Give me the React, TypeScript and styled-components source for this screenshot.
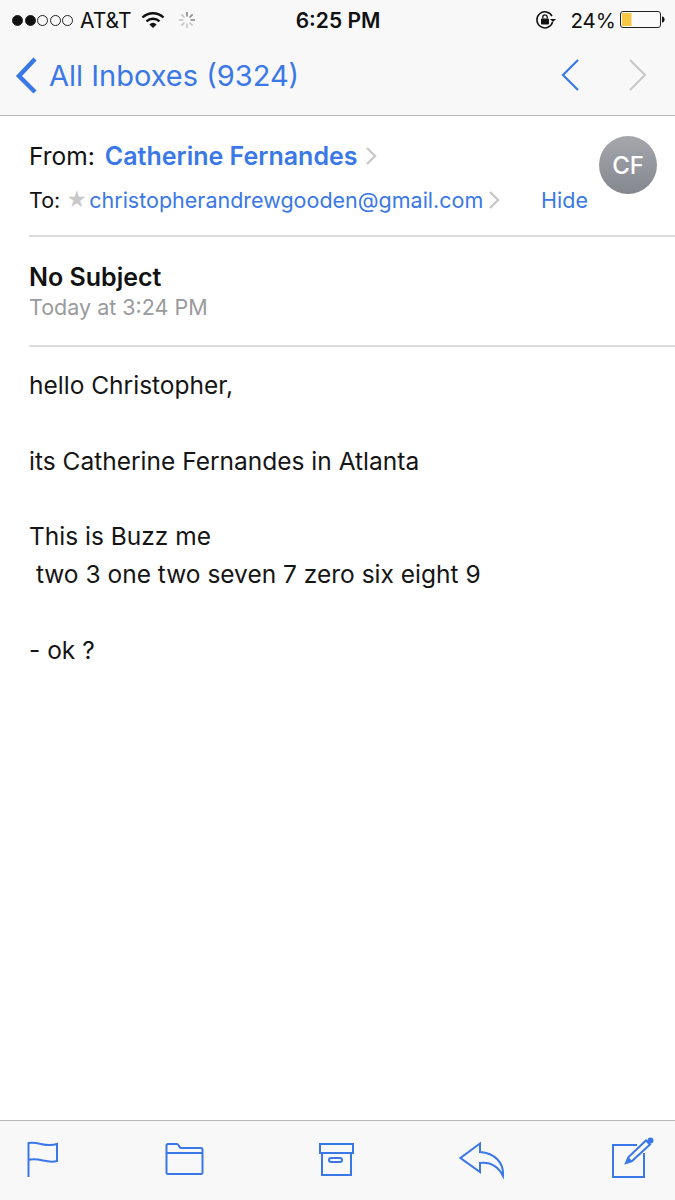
import styled, { createGlobalStyle } from "styled-components";

const BLUE = "#3b78e7";

const Global = createGlobalStyle`
  html, body { margin: 0; padding: 0; background: #fff; }
  body { font-family: Inter, "Liberation Sans", sans-serif; color: #111; }
`;

const Page = styled.div`
  width: 675px;
  height: 1200px;
  display: flex;
  flex-direction: column;
  overflow: hidden;
  background: #fff;
`;

const TopBar = styled.header`
  height: 116px;
  box-sizing: border-box;
  flex: none;
  background: #f8f8f9;
  border-bottom: 1px solid #b9b9bb;
`;

const StatusBar = styled.div`
  height: 40px;
  display: grid;
  grid-template-columns: 1fr auto 1fr;
  align-items: center;
  padding: 0 10px 0 12px;
  font-size: 21px;
  color: #111;
`;

const StatusSide = styled.div<{ $end?: boolean }>`
  display: flex;
  align-items: center;
  justify-content: ${(p) => (p.$end ? "flex-end" : "flex-start")};
`;

const Dots = styled.div`
  display: flex;
  gap: 1.5px;
  margin-right: 7px;
`;

const Dot = styled.span<{ $on?: boolean }>`
  width: 11px;
  height: 11px;
  box-sizing: border-box;
  border-radius: 50%;
  border: 1px solid #222;
  background: ${(p) => (p.$on ? "#111" : "transparent")};
`;

const Carrier = styled.span`
  margin-right: 10px;
`;

const Clock = styled.span`
  font-weight: 600;
  margin-right: 1px;
`;

const Percent = styled.span`
  font-size: 20.5px;
  margin: 0 4px 0 13px;
`;

const NavRow = styled.nav`
  height: 75px;
  box-sizing: border-box;
  display: flex;
  align-items: center;
  padding: 0 28px 5px 14px;
`;

const BackLink = styled.div`
  display: flex;
  align-items: center;
  gap: 11px;
  flex: 1;
  font-size: 29px;
  color: ${BLUE};
`;

const Pager = styled.div`
  display: flex;
  gap: 48px;
  align-items: center;
`;

const Sender = styled.section`
  height: 121px;
  box-sizing: border-box;
  margin-left: 29px;
  padding: 20px 18px 0 0;
  border-bottom: 2px solid #dcdcde;
  display: flex;
  flex: none;
`;

const SenderLines = styled.div`
  flex: 1;
`;

const FromRow = styled.div`
  display: flex;
  align-items: center;
  height: 40px;
  font-size: 24.5px;
`;

const FromName = styled.span`
  color: ${BLUE};
  font-weight: 600;
  font-size: 25px;
  margin: 0 7px 0 10px;
`;

const ToRow = styled.div`
  display: flex;
  align-items: center;
  height: 40px;
  margin-top: 4px;
  font-size: 21.5px;
`;

const Star = styled.span`
  color: #c9c9cb;
  margin: 0 2px 0 6px;
  font-size: 20px;
`;

const Address = styled.span`
  color: ${BLUE};
  margin-right: 5px;
`;

const Hide = styled.span`
  color: ${BLUE};
  margin-left: auto;
  margin-right: 11px;
`;

const Avatar = styled.div`
  width: 58px;
  height: 58px;
  border-radius: 50%;
  background: linear-gradient(#a5a7ad, #85878f);
  color: #fff;
  font-size: 24px;
  font-weight: 500;
  display: flex;
  align-items: center;
  justify-content: center;
  flex: none;
`;

const Subject = styled.section`
  height: 110px;
  box-sizing: border-box;
  margin-left: 29px;
  padding-top: 24px;
  border-bottom: 2px solid #dcdcde;
  flex: none;
`;

const SubjectTitle = styled.div`
  font-size: 25px;
  font-weight: 600;
  line-height: 32px;
`;

const SubjectDate = styled.div`
  font-size: 21.5px;
  color: #9a9a9c;
  line-height: 28px;
`;

const Body = styled.main`
  flex: 1;
  padding: 20px 29px 0;
  font-size: 24.5px;
  line-height: 37.8px;
  color: #151515;
  white-space: pre-wrap;
`;

const BottomBar = styled.footer`
  height: 80px;
  box-sizing: border-box;
  flex: none;
  background: #f8f8f9;
  border-top: 1px solid #b9b9bb;
  display: flex;
  align-items: flex-start;
  justify-content: space-between;
  padding: 16px 21px 0 25px;
`;

const IconSvg = styled.svg<{ $left?: number }>`
  display: block;
  flex: none;
  margin-left: ${(p) => p.$left ?? 0}px;
`;

const Wifi = () => (
  <IconSvg width="24" height="18" viewBox="0 0 24 18">
    <path d="M1.5 6.5a15 15 0 0 1 21 0" fill="none" stroke="#111" strokeWidth="2.4" />
    <path d="M5.5 10.3a9.5 9.5 0 0 1 13 0" fill="none" stroke="#111" strokeWidth="2.4" />
    <path d="M12 17l-3.6-3.6a5 5 0 0 1 7.2 0z" fill="#111" />
  </IconSvg>
);

const Spinner = () => (
  <IconSvg $left={12} width="20" height="20" viewBox="0 0 20 20">
    {Array.from({ length: 8 }).map((_, i) => (
      <line
        key={i}
        x1="10"
        y1="2"
        x2="10"
        y2="6.5"
        stroke={i < 3 ? "#8a8a8a" : "#c4c4c4"}
        strokeWidth="1.6"
        transform={`rotate(${i * 45} 10 10)`}
      />
    ))}
  </IconSvg>
);

const RotationLock = () => (
  <IconSvg width="22" height="20" viewBox="0 0 22 20">
    <path d="M17 6.2A8 8 0 1 0 17.6 12" fill="none" stroke="#111" strokeWidth="1.5" />
    <path d="M15 9h6l-3 3z" fill="#111" />
    <rect x="6" y="8.5" width="8" height="6" rx="1" fill="#111" />
    <path d="M7.8 8.5V7a2.2 2.2 0 0 1 4.4 0v1.5" fill="none" stroke="#111" strokeWidth="1.3" />
  </IconSvg>
);

const Battery = () => (
  <IconSvg width="45" height="18" viewBox="0 0 45 18">
    <rect x="0.5" y="0.5" width="40" height="16" rx="2.5" fill="#fbfbfb" stroke="#222" />
    <rect x="2" y="2" width="9.5" height="13" fill="#f6c844" />
    <path d="M42 5.5c1.8.3 2.6 1.4 2.6 3s-.8 2.7-2.6 3z" fill="#111" />
  </IconSvg>
);

const Chevron = ({
  points,
  w,
  h,
  color,
  sw,
}: {
  points: string;
  w: number;
  h: number;
  color: string;
  sw: number;
}) => (
  <IconSvg width={w} height={h} viewBox={`0 0 ${w} ${h}`}>
    <polyline points={points} fill="none" stroke={color} strokeWidth={sw} />
  </IconSvg>
);

const Flag = () => (
  <IconSvg width="34" height="40" viewBox="0 0 34 40">
    <path
      d="M3.5 40V6c10-2 17 5 28.5 1v17c-10 3-18-4-28.500-1"
      fill="none"
      stroke={BLUE}
      strokeWidth="2"
    />
  </IconSvg>
);

const Folder = () => (
  <IconSvg $left={1} width="40" height="42" viewBox="0 0 40 42">
    <path
      d="M1.5 16V8.5A1.5 1.5 0 0 1 3 7h9c2 0 2 4 4 4h20a1.5 1.5 0 0 1 1.5 1.5v23a1.5 1.5 0 0 1-1.5 1.5H3a1.5 1.5 0 0 1-1.5-1.5zM1.5 16h36"
      fill="none"
      stroke={BLUE}
      strokeWidth="2"
    />
  </IconSvg>
);

const ArchiveBox = () => (
  <IconSvg $left={5} width="38" height="42" viewBox="0 0 38 42">
    <path
      d="M4 7h33v9H4zM6 16v22h29V16M15 21h9a2 2 0 0 1 0 4h-9a2 2 0 0 1 0-4z"
      fill="none"
      stroke={BLUE}
      strokeWidth="2"
    />
  </IconSvg>
);

const Reply = () => (
  <IconSvg width="46" height="42" viewBox="0 0 46 42">
    <path
      d="M21 6.5L1.5 21 21 35v-9c10-1 18 3 23 13 1-13-8-23-23-24z"
      fill="none"
      stroke={BLUE}
      strokeWidth="2"
    />
  </IconSvg>
);

const Compose = () => (
  <IconSvg width="44" height="44" viewBox="0 0 44 44">
    <path d="M27 8H3v32h31V16" fill="none" stroke={BLUE} strokeWidth="2" />
    <path d="M16 26l2.5-6L36 3.500l4 4L22 24z" fill="none" stroke={BLUE} strokeWidth="2" />
    <path d="M16 26l2.5-6 3.500 4z" fill={BLUE} />
    <circle cx="40.5" cy="3.5" r="3" fill={BLUE} />
  </IconSvg>
);

const body = `hello Christopher,

its Catherine Fernandes in Atlanta

This is Buzz me
 two 3 one two seven 7 zero six eight 9

- ok ?`;

export default function App() {
  return (
    <Page>
      <Global />
      <TopBar>
        <StatusBar>
          <StatusSide>
            <Dots>
              <Dot $on />
              <Dot $on />
              <Dot />
              <Dot />
              <Dot />
            </Dots>
            <Carrier>AT&amp;T</Carrier>
            <Wifi />
            <Spinner />
          </StatusSide>
          <Clock>6:25 PM</Clock>
          <StatusSide $end>
            <RotationLock />
            <Percent>24%</Percent>
            <Battery />
          </StatusSide>
        </StatusBar>
        <NavRow>
          <BackLink>
            <Chevron points="21,3 5,20 21,36" w={24} h={39} color={BLUE} sw={4.5} />
            All Inboxes (9324)
          </BackLink>
          <Pager>
            <Chevron points="17,2 2,17 17,32" w={19} h={34} color={BLUE} sw={2.2} />
            <Chevron points="2,2 17,17 2,32" w={19} h={34} color="#c9c9cb" sw={2.2} />
          </Pager>
        </NavRow>
      </TopBar>

      <Sender>
        <SenderLines>
          <FromRow>
            From:
            <FromName>Catherine Fernandes</FromName>
            <Chevron points="2,2 10,10 2,18" w={13} h={20} color="#c8c8ca" sw={2.4} />
          </FromRow>
          <ToRow>
            To:
            <Star>★</Star>
            <Address>christopherandrewgooden@gmail.com</Address>
            <Chevron points="2,2 10,10 2,18" w={13} h={20} color="#c8c8ca" sw={2.4} />
            <Hide>Hide</Hide>
          </ToRow>
        </SenderLines>
        <Avatar>CF</Avatar>
      </Sender>

      <Subject>
        <SubjectTitle>No Subject</SubjectTitle>
        <SubjectDate>Today at 3:24 PM</SubjectDate>
      </Subject>

      <Body>{body}</Body>

      <BottomBar>
        <Flag />
        <Folder />
        <ArchiveBox />
        <Reply />
        <Compose />
      </BottomBar>
    </Page>
  );
}
